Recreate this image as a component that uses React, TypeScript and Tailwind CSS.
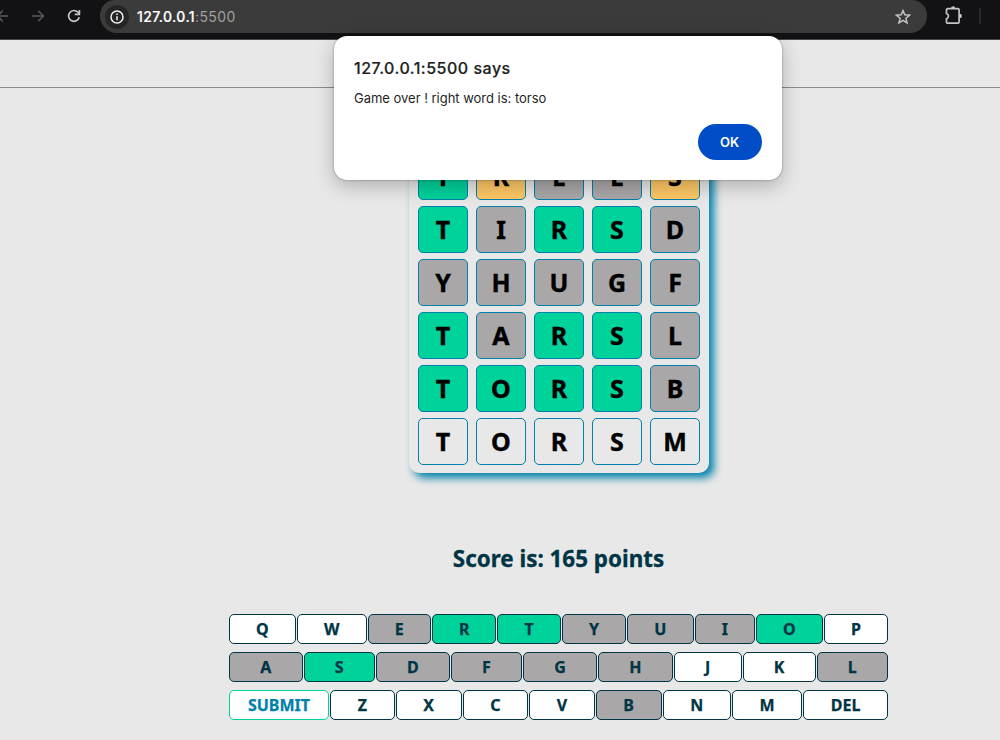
type State = "hit" | "near" | "miss" | "empty";

const tileColor: Record<State, string> = {
  hit: "bg-[#00d29b]",
  near: "bg-[#ffc866]",
  miss: "bg-[#a9a7a8]",
  empty: "bg-transparent",
};

const keyColor: Record<State, string> = {
  hit: "bg-[#00d29b]",
  near: "bg-[#ffc866]",
  miss: "bg-[#a9a7a8]",
  empty: "bg-white",
};

const codes: Record<string, State> = { h: "hit", n: "near", m: "miss", e: "empty" };

const guesses: [string, string][] = [
  ["TREES", "hnmmn"],
  ["TIRSD", "hmhhm"],
  ["YHUGF", "mmmmm"],
  ["TARSL", "hmhhm"],
  ["TORSB", "hhhhm"],
  ["TORSM", "eeeee"],
];

const keyRows: [string[], string][] = [
  ["QWERTYUIOP".split(""), "eemhhmmmhe"],
  ["ASDFGHJKL".split(""), "mhmmmmeem"],
  [["SUBMIT", "Z", "X", "C", "V", "B", "N", "M", "DEL"], "eeeeemeee"],
];

function Toolbar() {
  return (
    <div className="flex h-10 items-start border-b border-[#49474a] bg-[#121214]">
      <div className="flex h-8 w-[100px] shrink-0 items-center">
        <svg className="-ml-1 h-4 w-4 shrink-0" viewBox="0 0 16 16" fill="none" stroke="#59595b" strokeWidth="1.6">
          <path d="M12 8H2M6.7 2.8 1.5 8l5.2 5.2" />
        </svg>
        <svg className="ml-[18px] h-4 w-4 shrink-0" viewBox="0 0 16 16" fill="none" stroke="#59595b" strokeWidth="1.6">
          <path d="M2 8h11M8.2 2.8 13.4 8l-5.2 5.2" />
        </svg>
        <svg className="ml-5 h-4 w-4 shrink-0" viewBox="0 0 16 16" fill="none" stroke="#c5c5c6" strokeWidth="1.7">
          <path d="M13.2 9.2A5.4 5.4 0 1 1 12 4.3L13.2 5.6" />
          <path d="M13.4 1.9v4.5H8.8" />
        </svg>
      </div>
      <div className="flex h-[33px] w-[827px] shrink-0 items-center rounded-b-[17px] rounded-t-[15px] bg-[#3b3b3b] pl-[5px] pr-4">
        <div className="flex h-6 w-6 items-center justify-center rounded-full bg-[#252525]">
          <svg className="h-[14px] w-[14px]" viewBox="0 0 14 14" fill="none" stroke="#f2f2f2" strokeWidth="1.5">
            <circle cx="7" cy="7" r="6" />
            <path d="M7 6.3v4M7 3.6v1.5" />
          </svg>
        </div>
        <span className="-mt-px ml-2 font-['Inter',sans-serif] text-[14px] tracking-[0.38px] text-[#a0a0a0]">
          <span className="font-medium text-white [-webkit-text-stroke:0.2px_white]">127.0.0.1</span>:5500
        </span>
        <svg className="ml-auto h-4 w-4" viewBox="0 0 16 16" fill="none" stroke="#c4c4c4" strokeWidth="1.5">
          <path d="m8 1.6 1.8 4.2 4.7.4-3.6 3.1 1.1 4.6L8 11.4l-4 2.5 1.1-4.6-3.6-3.1 4.7-.4z" />
        </svg>
      </div>
      <svg className="ml-[17px] mt-[6px] h-[19px] w-[19px] shrink-0" viewBox="0 0 19 19">
        <path
          d="M3.8 2.7h10q1.3 0 1.3 1.3v12q0 1.2-1.3 1.2h-10q-1.3 0-1.3-1.2v-3.3q2-.6 2-2.6t-2-2.6V4q0-1.3 1.3-1.3z"
          fill="none"
          stroke="#c5c5c6"
          strokeWidth="1.7"
        />
        <path d="M7 2.3a2.1 2.1 0 0 1 4.2 0zM15.6 7.7a2.3 2.3 0 0 1 0 4.6z" fill="#c5c5c6" />
      </svg>
      <div className="ml-4 mt-2 h-4 w-[2px] bg-[#29292b]" />
    </div>
  );
}

function Dialog() {
  return (
    <div className="absolute left-[334px] top-9 flex h-36 w-[448px] flex-col rounded-[13px] bg-white px-5 pt-[22px] font-['Inter',sans-serif] text-[#1f1f1f] shadow-[0_0_2px_rgba(0,0,0,0.45),0_6px_20px_rgba(0,0,0,0.25)]">
      <h2 className="text-[16px] font-medium leading-5 tracking-[0.5px] [-webkit-text-stroke:0.2px_#1f1f1f]">127.0.0.1:5500 says</h2>
      <p className="mt-3 text-[13px] leading-4 tracking-[-0.02px]">Game over ! right word is: torso</p>
      <button className="mt-[18px] h-9 w-16 self-end rounded-full bg-[#004dc7] pt-px pr-px text-[13px] font-semibold text-white">
        OK
      </button>
    </div>
  );
}

function Board() {
  return (
    <div className="flex h-[328px] w-[300px] flex-col gap-[6px] rounded-[10px] bg-[#e8e8e8] pl-[9px] pt-2 shadow-[5px_5px_8px_#0081ab]">
      {guesses.map(([word, marks], r) => (
        <div key={r} className="flex gap-2">
          {word.split("").map((letter, c) => (
            <div
              key={c}
              className={`flex h-[47px] w-[50px] items-center justify-center rounded-[5px] border border-[#0081ab] pl-px text-[25px] font-bold leading-none text-black [-webkit-text-stroke:0.4px_black] ${tileColor[codes[marks[c]]]}`}
            >
              {letter}
            </div>
          ))}
        </div>
      ))}
    </div>
  );
}

function Keyboard() {
  return (
    <div className="flex w-[659px] flex-col gap-2">
      {keyRows.map(([keys, marks], r) => (
        <div key={r} className="flex gap-px">
          {keys.map((label, i) => (
            <button
              key={label}
              className={`h-[30px] rounded-[5px] border px-[6px] text-[16px] font-bold leading-none [-webkit-text-stroke:0.25px_currentColor] ${
                label === "SUBMIT"
                  ? "w-[100px] flex-none border-[#00d29b] text-[#0081ab]"
                  : "flex-auto border-[#003545] text-[#003545]"
              } ${keyColor[codes[marks[i]]]}`}
            >
              {label}
            </button>
          ))}
        </div>
      ))}
    </div>
  );
}

export default function App() {
  return (
    <div className="relative h-[740px] w-[1000px] overflow-hidden bg-[#e8e8e8] font-['Noto_Sans',sans-serif]">
      <Toolbar />
      <header className="h-12 border-b border-[#8b8b8b]" />
      <main className="flex flex-col items-center pl-[117px] pt-[57px]">
        <Board />
        <h1 className="mt-[70px] text-[22.4px] font-bold leading-8 text-[#003545] [-webkit-text-stroke:0.3px_#003545]">
          Score is: 165 points
        </h1>
        <div className="mt-[39px]">
          <Keyboard />
        </div>
      </main>
      <Dialog />
    </div>
  );
}
